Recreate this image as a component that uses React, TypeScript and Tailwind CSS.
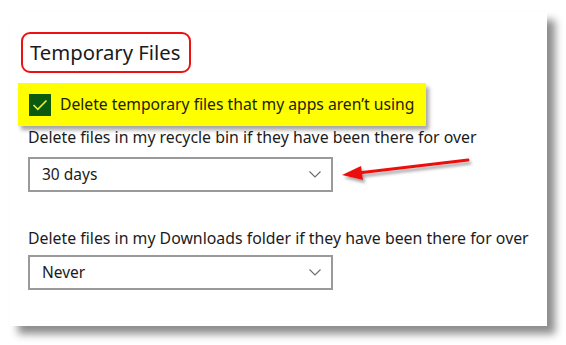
import React from 'react';

const Chevron = () => (
  <svg width="12" height="7" viewBox="0 0 12 7" className="shrink-0">
    <path d="M0.5 0.5 L6 6 L11.5 0.5" fill="none" stroke="#6b6b6b" strokeWidth="1.1" />
  </svg>
);

const Dropdown = ({ value }: { value: string }) => (
  <div className="flex h-[35px] w-[305px] items-center justify-between border-2 border-[#9a9a9a] bg-white pl-[12px] pr-[10px]">
    <span className="text-[15.5px] text-[#1b1b1b]">{value}</span>
    <Chevron />
  </div>
);

export default function App() {
  return (
    <div
      className="relative h-[345px] w-[566px] overflow-hidden bg-white"
      style={{ fontFamily: '"Noto Sans", "Open Sans", sans-serif' }}
    >
      <div className="ml-[10px] mt-[12px] h-[314px] w-[537px] bg-white pl-[18px] pt-[20px] shadow-[8px_8px_8px_rgba(0,0,0,0.45)]">
        {/* heading, circled in red */}
        <div className="-ml-[7px] inline-flex h-[41px] items-center rounded-[9px] border-2 border-[#ee1111] pl-[7px] pr-[8px]">
          <span className="text-[20.3px] leading-none text-[#1b1b1b]">Temporary Files</span>
        </div>

        {/* highlighted checkbox row */}
        <div className="-ml-[10px] mt-[10px] flex h-[43px] w-[408px] items-center gap-[9px] bg-[#ffff00] pl-[11px] shadow-[3px_4px_4px_rgba(0,0,0,0.35)]">
          <div className="flex h-[22px] w-[22px] items-center justify-center bg-[#0b5a10]">
            <svg width="16" height="12" viewBox="0 0 16 12">
              <path d="M1.5 6 L5.8 10.3 L14.5 1.5" fill="none" stroke="#e8f03a" strokeWidth="1.6" />
            </svg>
          </div>
          <span className="text-[15.7px] text-[#1e1e00]">Delete temporary files that my apps aren’t using</span>
        </div>

        <div className="mt-[1px] text-[15.85px] leading-[20px] text-[#1b1b1b]">
          Delete files in my recycle bin if they have been there for over
        </div>
        <div className="mt-[10px]">
          <Dropdown value="30 days" />
        </div>

        <div className="mt-[36px] text-[15.85px] leading-[20px] text-[#1b1b1b]">
          Delete files in my Downloads folder if they have been there for over
        </div>
        <div className="mt-[7px]">
          <Dropdown value="Never" />
        </div>
      </div>

      {/* red annotation arrow */}
      <svg className="absolute left-[336px] top-[152px]" width="140" height="34" viewBox="0 0 140 34">
        <defs>
          <filter id="s" x="-10%" y="-40%" width="120%" height="200%">
            <feDropShadow dx="2" dy="3" stdDeviation="1.5" floodColor="#000" floodOpacity="0.35" />
          </filter>
        </defs>
        <g filter="url(#s)">
          <path d="M132 8 L22 21" stroke="#ee1111" strokeWidth="3" strokeLinecap="round" />
          <path d="M6 23 L25 14 L27 28 Z" fill="#ee1111" />
        </g>
      </svg>
    </div>
  );
}
